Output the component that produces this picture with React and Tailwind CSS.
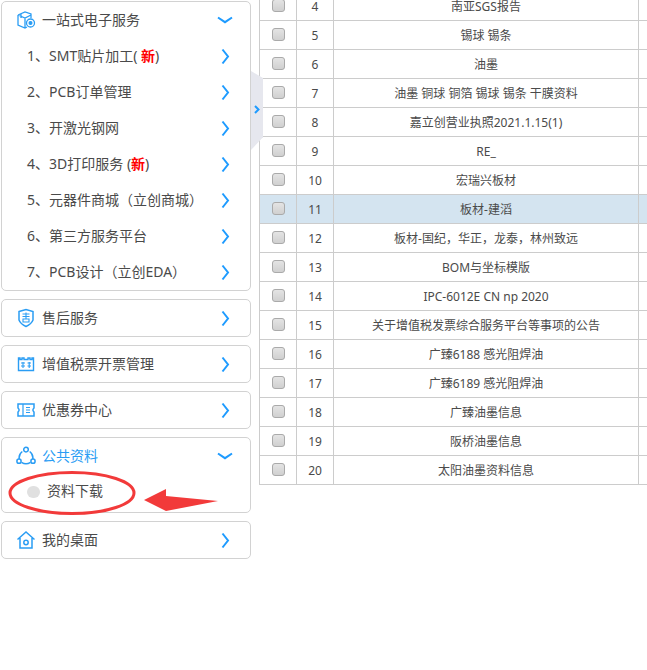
import React from "react";

const rows = [
  [4, "南亚SGS报告"],
  [5, "锡球 锡条"],
  [6, "油墨"],
  [7, "油墨 铜球 铜箔 锡球 锡条 干膜资料"],
  [8, "嘉立创营业执照2021.1.15(1)"],
  [9, "RE_"],
  [10, "宏瑞兴板材"],
  [11, "板材-建滔"],
  [12, "板材-国纪，华正，龙泰，林州致远"],
  [13, "BOM与坐标模版"],
  [14, "IPC-6012E CN np 2020"],
  [15, "关于增值税发票综合服务平台等事项的公告"],
  [16, "广臻6188 感光阻焊油"],
  [17, "广臻6189 感光阻焊油"],
  [18, "广臻油墨信息"],
  [19, "阪桥油墨信息"],
  [20, "太阳油墨资料信息"],
];

const services = [
  <>1、SMT贴片加工( <b className="text-[#f00]">新</b>)</>,
  "2、PCB订单管理",
  "3、开激光钢网",
  <>4、3D打印服务 (<b className="text-[#f00]">新</b>)</>,
  "5、元器件商城（立创商城）",
  "6、第三方服务平台",
  "7、PCB设计（立创EDA）",
];

function ChevronRight() {
  return (
    <svg width="9" height="17" viewBox="0 0 9 17" className="shrink-0" fill="none" stroke="#1e9bff" strokeWidth="2">
      <path d="M1.5 1.5 L7 8.5 L1.5 15.5" />
    </svg>
  );
}

function ChevronDown() {
  return (
    <svg width="16" height="8" viewBox="0 0 16 8" className="shrink-0" fill="none" stroke="#1e9bff" strokeWidth="2">
      <path d="M1 1.5 L8 6.2 L15 1.5" />
    </svg>
  );
}

const icon = { width: 20, height: 20, viewBox: "0 0 20 20", fill: "none", stroke: "#2a9df4", strokeWidth: 1.3 };

function CubeIcon() {
  return (
    <svg {...icon}>
      <path d="M2 5 L9 2 L15 4 L15 8 M2 5 L2 15 L9 18 L11 17 M2 5 L9 8 L15 5 M9 8 L9 18 M5 4 L5 8" />
      <circle cx="14.5" cy="13" r="4" />
      <circle cx="14.5" cy="13" r="1.4" fill="#2a9df4" />
    </svg>
  );
}

function ShieldIcon() {
  return (
    <svg {...icon} strokeWidth="1.5">
      <path d="M3 3.5 L10 1.5 L17 3.5 L17 12 Q15.5 16 10 18.5 Q4.5 16 3 12 Z" />
      <path d="M6.5 6 H13.5 M6.5 8.5 H13.5 M10 4.5 V10.5 M7 11 H13 V14 H7 Z" strokeWidth="1.1" />
    </svg>
  );
}

function InvoiceIcon() {
  return (
    <svg {...icon} strokeWidth="1.4">
      <path d="M2.5 4 H4 V5.5 H6 V4 H8 V5.5 H12 V4 H14 V5.5 H16 V4 H17.5 V16.5 H2.5 Z" />
      <path d="M5 9 H9 M5 12 H9 M11.5 9 H15 M11.5 12 H15 M7 8 V14 M13.2 8 V14" strokeWidth="1.1" />
    </svg>
  );
}

function CouponIcon() {
  return (
    <svg {...icon} strokeWidth="1.5">
      <path d="M2 4 H18 V8 Q15.8 10 18 12 V16 H2 V12 Q4.2 10 2 8 Z" />
      <path d="M7 4 V16 M10 7.5 H14 M10 10 H14 M10 12.5 H14" strokeWidth="1.2" />
    </svg>
  );
}

function ShareIcon() {
  return (
    <svg {...icon} strokeWidth="1.5">
      <path d="M6.3 5.5 A8 8 0 0 0 3.2 13 M13.7 5.5 A8 8 0 0 1 16.8 13 M5.5 16.3 A8 8 0 0 0 14.5 16.3" />
      <circle cx="10" cy="3.6" r="2.3" />
      <circle cx="3" cy="15.2" r="2.1" />
      <circle cx="17" cy="15.2" r="2.1" />
    </svg>
  );
}

function HomeIcon() {
  return (
    <svg {...icon} strokeWidth="1.5">
      <path d="M1.5 9.5 L10 2 L18.5 9.5 M4 8 V18 H16 V8" />
      <circle cx="10" cy="12.5" r="2.2" />
    </svg>
  );
}

function Header({ icon, title, open, active }) {
  return (
    <div className="flex h-9 items-center pl-[14px] pr-[17px]">
      <span className="flex w-[26px] shrink-0">{icon}</span>
      <span className={"mb-[2px] flex-1 " + (active ? "text-[#2a9df4]" : "")}>{title}</span>
      {open ? <ChevronDown /> : <span className="mr-[3px] flex"><ChevronRight /></span>}
    </div>
  );
}

function Card({ children }) {
  return <div className="rounded-[5px] border border-[#d2d2d2] bg-white">{children}</div>;
}

export default function App() {
  return (
    <div className="relative flex h-[670px] w-[647px] overflow-hidden bg-white font-['Noto_Sans','Noto_Sans_CJK_SC',sans-serif] text-[14px] text-[#4a4a4a]">
      {/* Left menu */}
      <div className="ml-px mt-px flex w-[250px] shrink-0 flex-col gap-2">
        <Card>
          <Header icon={<CubeIcon />} title="一站式电子服务" open />
          {services.map((label, i) => (
            <div key={i} className="flex h-9 items-center justify-between pl-[25px] pr-5">
              <span className="mb-[2px]">{label}</span>
              <ChevronRight />
            </div>
          ))}
        </Card>
        <Card><Header icon={<ShieldIcon />} title="售后服务" /></Card>
        <Card><Header icon={<InvoiceIcon />} title="增值税票开票管理" /></Card>
        <Card><Header icon={<CouponIcon />} title="优惠券中心" /></Card>
        <Card>
          <Header icon={<ShareIcon />} title="公共资料" open active />
          <div className="flex h-[38px] items-center pb-[3px] pl-[25px]">
            <span className="mr-[7px] h-[12px] w-[13px] rounded-full bg-[#e0e0e0]"></span>
            <span className="mb-[2px]">资料下载</span>
          </div>
        </Card>
        <Card><Header icon={<HomeIcon />} title="我的桌面" /></Card>
      </div>

      {/* File table, scrolled so the first rows are off screen */}
      <div className="ml-2 mt-[-9px] shrink-0">
        <table className="w-[500px] table-fixed border-collapse border border-[#ccc] text-center text-[12px]">
          <colgroup>
            <col className="w-[37px]" />
            <col className="w-[37px]" />
            <col className="w-[305px]" />
            <col />
          </colgroup>
          <tbody>
            {rows.map(([no, name]) => (
              <tr key={no} className={"h-[29px] " + (no === 11 ? "bg-[#d4e4f0]" : "")}>
                <td className="border border-[#ccc] p-0">
                  <input type="checkbox" className="mx-auto mb-[2px] block h-[13px] w-[13px] appearance-none rounded-[3px] border border-[#aaa] bg-gradient-to-b from-[#e4e4e4] to-[#d0d0d0]" />
                </td>
                <td className="border border-[#ccc] p-0 pt-px">{no}</td>
                <td className="border border-[#ccc] p-0 pt-px">{name}</td>
                <td className="border border-[#ccc] p-0"></td>
              </tr>
            ))}
          </tbody>
        </table>
      </div>

      {/* Collapse handle on the menu edge */}
      <div className="absolute left-[251px] top-[71px] flex h-[79px] w-3 items-center justify-end bg-[#e6e7ee] pr-[3px] [clip-path:polygon(0_0,100%_9%,100%_84%,0_100%)]">
        <svg width="6" height="9" viewBox="0 0 6 9" fill="none" stroke="#1e9bff" strokeWidth="2" className="mb-[2px]">
          <path d="M1 1 L4.5 4.5 L1 8" />
        </svg>
      </div>

      {/* Red hand-drawn annotation */}
      <svg className="absolute left-0 top-[465px]" width="225" height="55" viewBox="0 465 225 55" fill="none">
        <ellipse cx="72" cy="493" rx="62" ry="20.5" stroke="#f23a3a" strokeWidth="3" />
        <path d="M144 500 L166 489 L166 496 L218 501 L166 511 Z" fill="#f23a3a" />
      </svg>
    </div>
  );
}
